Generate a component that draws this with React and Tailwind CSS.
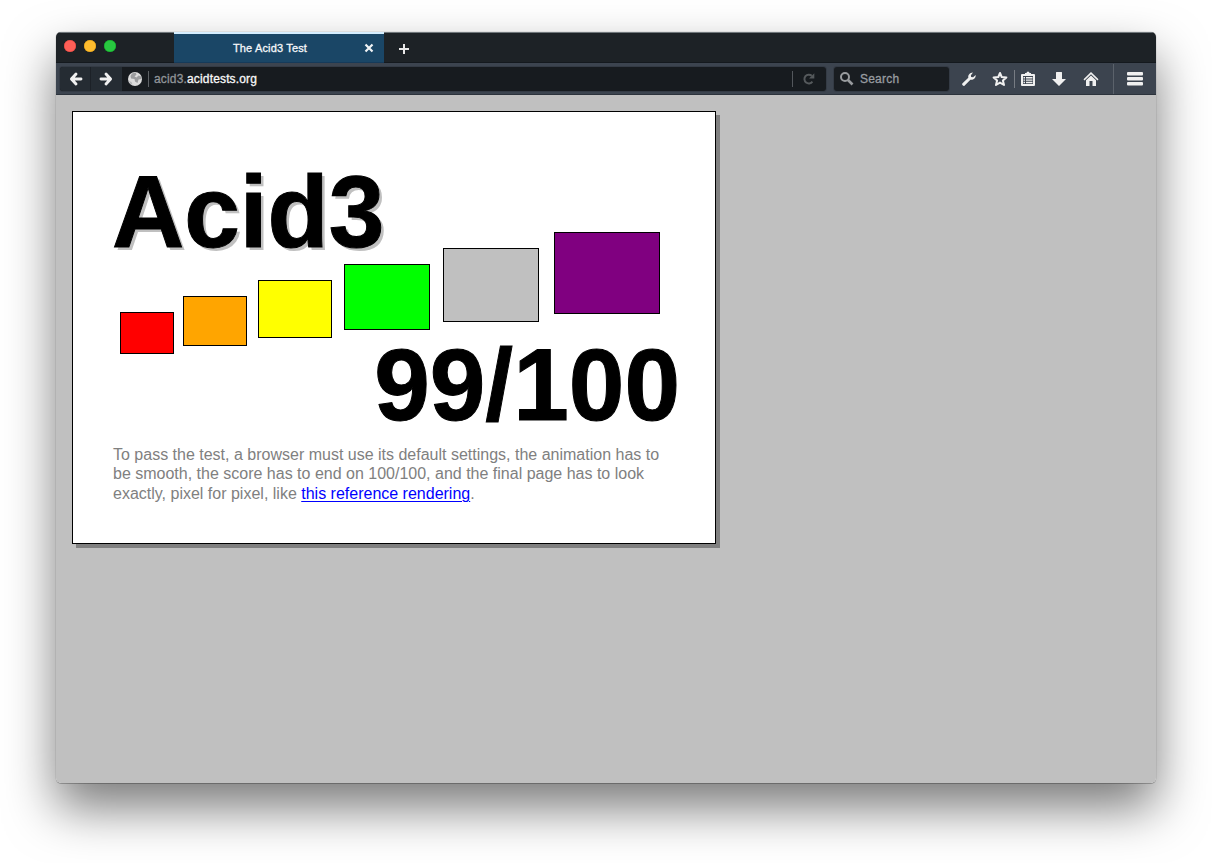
const buckets = [
  "mt-[80px] h-[42px] w-[54px] bg-[#ff0000]",
  "mt-[64px] ml-[9px] h-[50px] w-[64px] bg-[#ffa500]",
  "mt-[48px] ml-[11px] h-[58px] w-[74px] bg-[#ffff00]",
  "mt-[32px] ml-[12px] h-[66px] w-[86px] bg-[#00ff00]",
  "mt-[16px] ml-[13px] h-[74px] w-[96px] bg-[#c0c0c0]",
  "ml-[15px] h-[82px] w-[106px] bg-[#800080]",
];

function Icon({ children, className = "" }) {
  return (
    <svg
      width="16"
      height="16"
      viewBox="0 0 16 16"
      fill="#f0f0f0"
      className={"block shrink-0 " + className}
    >
      {children}
    </svg>
  );
}

function TabStrip() {
  return (
    <div className="flex h-[31px] shrink-0 border-t border-[#70777b] bg-[#1d2226] shadow-[inset_0_-1px_0_#14191e]">
      <div className="flex w-[118px] gap-2 pt-[7px] pl-2">
        <span className="size-3 rounded-full bg-[#fe5f57] shadow-[inset_0_0_0_0.5px_#e2463f]" />
        <span className="size-3 rounded-full bg-[#febc2e] shadow-[inset_0_0_0_0.5px_#e1a116]" />
        <span className="size-3 rounded-full bg-[#28c840] shadow-[inset_0_0_0_0.5px_#12ac28]" />
      </div>
      <div className="-mt-px flex h-[31px] w-[210px] items-center border-t-2 border-b border-t-[#d5eeff] border-b-[#163a59] bg-[#1a4666] pr-[10px]">
        <span className="flex-1 pl-[2px] text-center text-[11px] leading-none tracking-[0.16px] text-[#f5f7fa] [-webkit-text-stroke:0.3px_#f5f7fa]">
          The Acid3 Test
        </span>
        <svg width="10" height="10" viewBox="0 0 10 10" className="block">
          <path d="M1.5 1.5L8.5 8.5M8.5 1.5L1.5 8.5" stroke="#f0f3f5" strokeWidth="2.2" />
        </svg>
      </div>
      <svg width="12" height="12" viewBox="0 0 12 12" className="mt-[10px] ml-[14px] block">
        <path d="M6 1V11M1 6H11" stroke="#e8e8e8" strokeWidth="2" />
      </svg>
    </div>
  );
}

function Toolbar() {
  return (
    <div className="flex h-8 shrink-0 items-center border-b border-[#2c333c] bg-[#3c444f] pl-1">
      <div className="flex h-6 w-[766px] items-center rounded-[3px] bg-[#171b1f] shadow-[0_0_0_1px_#343b45]">
        <div className="flex h-6 w-[31px] items-center justify-center rounded-l-[3px] border-r border-[#1c2127] bg-[#252c33] pl-[2px]">
          <Icon>
            <path
              d="M8 3L3.4 8L8 13M4 8H13"
              fill="none"
              stroke="#f0f0f0"
              strokeWidth="2.9"
              strokeLinecap="round"
              strokeLinejoin="round"
            />
          </Icon>
        </div>
        <div className="flex h-6 w-[31px] items-center justify-center bg-[#252c33] pr-px">
          <Icon>
            <path
              d="M8 3L12.6 8L8 13M12 8H3"
              fill="none"
              stroke="#f0f0f0"
              strokeWidth="2.9"
              strokeLinecap="round"
              strokeLinejoin="round"
            />
          </Icon>
        </div>
        <Icon className="ml-[5px]">
          <circle cx="8" cy="8" r="7" fill="#dcdcdc" />
          <path d="M5 2.5L8.5 1.6L9.5 3.4L7.5 5.5L9.5 6.5L11.5 4.5L14 5.5L14.5 8L11.5 8.5L10.5 12L8 10.5L7.5 8L4 7.5L3.5 5Z" fill="#9b9c9e" />
          <path d="M2 10L4.5 11L5.5 13.5L3.5 13Z" fill="#b3b4b6" />
        </Icon>
        <span className="ml-[5px] h-4 w-px bg-[#5d6165]" />
        <span className="ml-[5px] flex-1 text-[12px] leading-4 tracking-[0.16px] whitespace-nowrap text-[#909498] [-webkit-text-stroke:0.3px_currentColor]">
          acid3.<span className="text-[#f8f8f8]">acidtests.org</span>
        </span>
        <span className="h-4 w-px bg-[#53575c]" />
        <svg width="14" height="14" viewBox="0 0 14 14" className="mr-[10px] ml-[9px] block">
          <path d="M9.8 3.8A4.4 4.4 0 1 0 10.4 9.6" fill="none" stroke="#55595c" strokeWidth="2" />
          <path d="M7 6.5H12.3V1.2Z" fill="#55595c" />
        </svg>
      </div>
      <div className="ml-2 flex h-6 w-[115px] items-center rounded-[3px] bg-[#191d21] pl-[5px] shadow-[0_0_0_1px_#343b45]">
        <svg width="15" height="15" viewBox="0 0 15 15" className="block">
          <circle cx="6" cy="6" r="4" fill="none" stroke="#989b9e" strokeWidth="2" />
          <path d="M9 9L13.5 13.5" stroke="#989b9e" strokeWidth="2.6" />
        </svg>
        <span className="ml-[6px] text-[12px] leading-4 tracking-[0.22px] text-[#989ca0] [-webkit-text-stroke:0.3px_currentColor]">
          Search
        </span>
      </div>
      <Icon className="ml-3">
        <path d="M1.3 12.6L7.3 6.8C6.8 4.2 8.7 1.7 12 1.6L9.9 4.2L10.1 6L12.1 6.2L14.7 4C15 7.4 12 9.3 9.4 8.7L3.5 14.7C2.3 15.5 .5 14 1.3 12.6Z" />
      </Icon>
      <Icon className="ml-[15px]">
        <path
          d="M8 2L9.7 6L14.4 6.4L10.9 9.5L12 14L8 11.6L4 14L5.1 9.5L1.6 6.4L6.3 6Z"
          fill="none"
          stroke="#f0f0f0"
          strokeWidth="2"
          strokeLinejoin="round"
        />
      </Icon>
      <span className="ml-[6px] h-[18px] w-px bg-[#777c83]" />
      <Icon className="ml-[5px]">
        <path
          fillRule="evenodd"
          d="M2 3H5V2H6.5L7 .7H9L9.5 2H11V3H14Q15 3 15 4V14Q15 15 14 15H2Q1 15 1 14V4Q1 3 2 3ZM3 5V13H13V5Z"
        />
        <path d="M3.5 6H5V7.4H3.5ZM6 6H12.5V7.4H6ZM3.5 8.4H5V9.8H3.5ZM6 8.4H12.5V9.8H6ZM3.5 10.8H5V12.2H3.5ZM6 10.8H12.5V12.2H6Z" />
      </Icon>
      <Icon className="ml-[15px]">
        <path d="M5 1.5Q5 1 5.5 1H10.5Q11 1 11 1.5V8H15L8 15L1 8H5Z" />
      </Icon>
      <Icon className="ml-4">
        <path d="M8 1L15.5 8.3L14.5 9.4L8 3.2L1.5 9.4L.5 8.3Z" />
        <path d="M8 4.5L13 9.2V15H9.5V10H6.5V15H3V9.2Z" />
      </Icon>
      <span className="ml-[14px] h-[30px] w-px bg-[#5b626b]" />
      <Icon className="ml-[13px]">
        <rect x="0" y="1" width="16" height="3.5" rx="1" />
        <rect x="0" y="6" width="16" height="3.5" rx="1" />
        <rect x="0" y="11" width="16" height="3.5" rx="1" />
      </Icon>
    </div>
  );
}

function AcidCard() {
  return (
    <div className="h-[433px] w-[644px] border border-black bg-white px-10 shadow-[4px_4px_0_#808080]">
      <h1 className="mt-[53px] -ml-px h-[67px] origin-top scale-y-[1.02] text-[100px] leading-[90px] font-bold text-black [-webkit-text-stroke:1px_#000] [text-shadow:3px_3px_0_#c0c0c0]">
        Acid3
      </h1>
      <div className="ml-[7px] flex items-start">
        {buckets.map((bucket) => (
          <div key={bucket} className={"shrink-0 border border-black " + bucket} />
        ))}
      </div>
      <div className="-mt-[16px] -mr-[5px] h-[106.75px] origin-top scale-y-[1.02] text-right text-[100px] leading-[90px] font-bold text-black [-webkit-text-stroke:1px_#000]">
        99/100
      </div>
      <p className="text-[16px] leading-[19.5px] whitespace-nowrap text-[#808080]">
        To pass the test, a browser must use its default settings, the animation has to
        <br />
        be smooth, the score has to end on 100/100, and the final page has to look
        <br />
        exactly, pixel for pixel, like{" "}
        <a className="text-[#0000ff] underline decoration-1 underline-offset-2">
          this reference rendering
        </a>
        .
      </p>
    </div>
  );
}

export default function App() {
  return (
    <div className="h-[863px] w-[1212px] overflow-hidden bg-white px-14 pt-8 font-['Liberation_Sans',Arial,sans-serif]">
      <div className="h-[751px] w-[1100px] rounded-[5px] shadow-[0_0_0_0.5px_rgba(0,0,0,0.12),0_1px_0_rgba(0,0,0,0.2),0_25px_50px_rgba(0,0,0,0.52)]">
        <div className="flex h-full flex-col overflow-hidden rounded-[5px] bg-[#c0c0c0]">
          <TabStrip />
          <Toolbar />
          <main className="flex-1 p-4">
            <AcidCard />
          </main>
        </div>
      </div>
    </div>
  );
}
